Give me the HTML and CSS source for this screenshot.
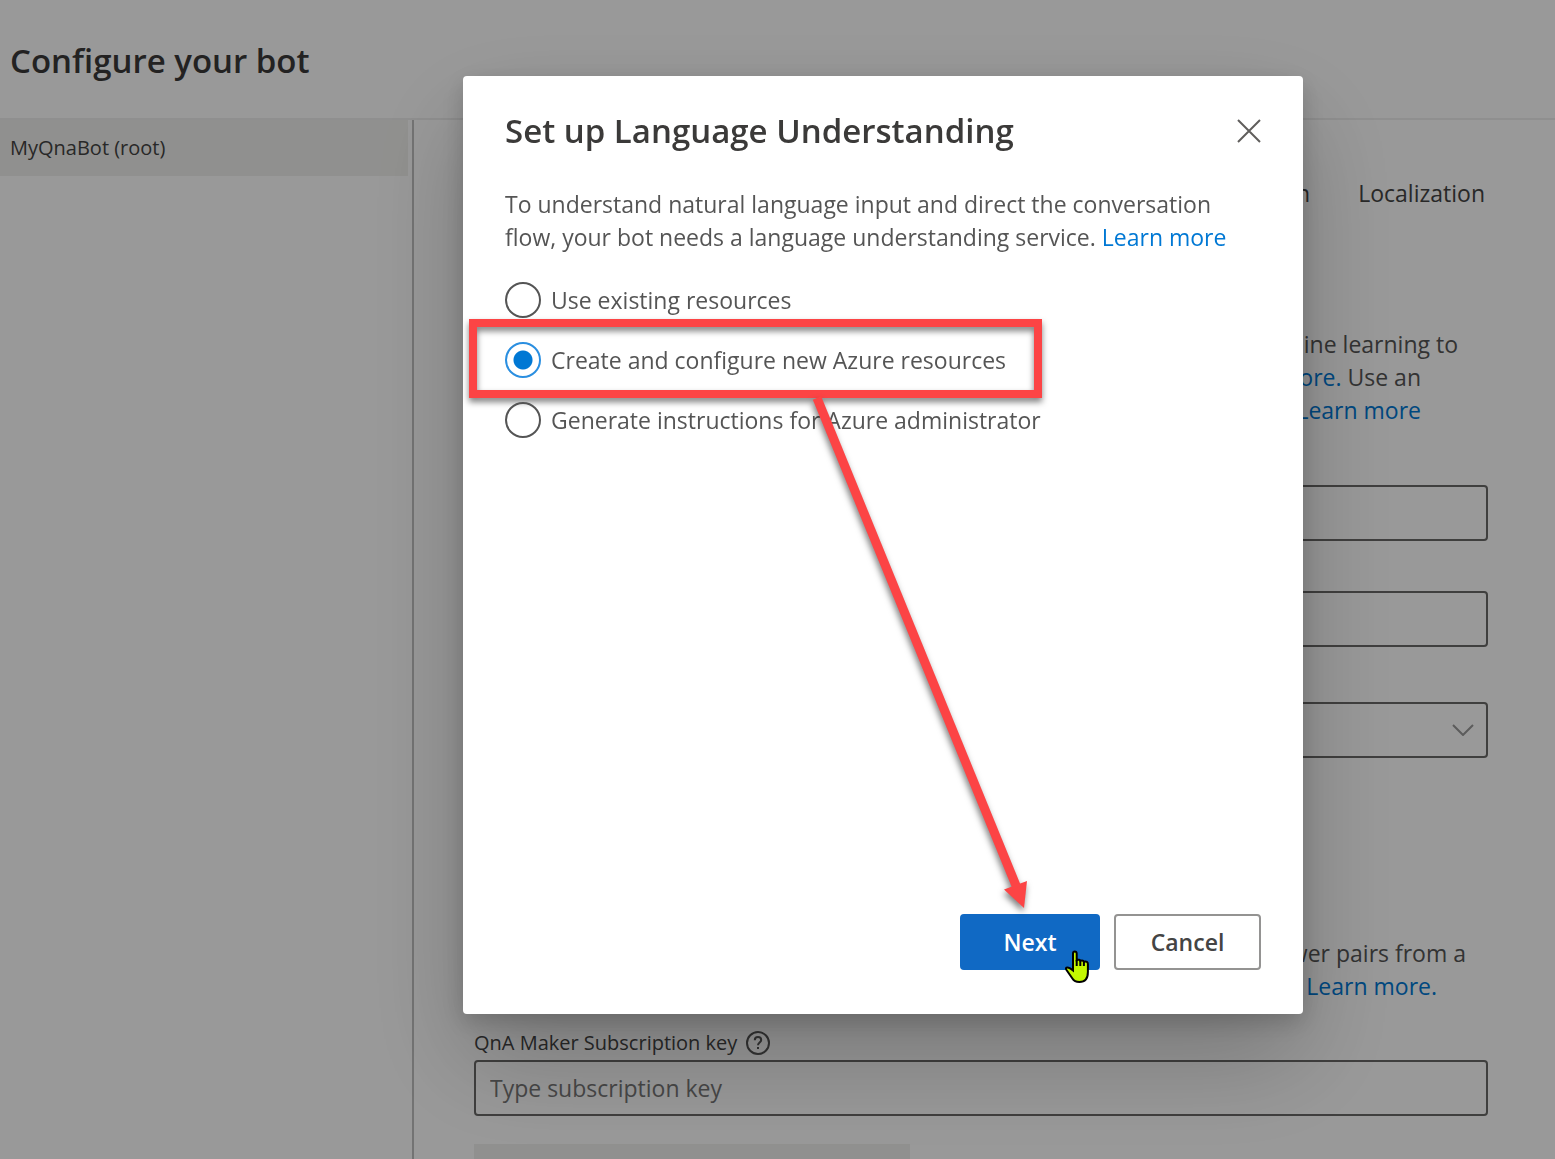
FILE: index.html
```html
<!DOCTYPE html>
<html lang="en">
<head>
<meta charset="utf-8">
<meta name="viewport" content="width=device-width, initial-scale=1">
<title>Configure your bot</title>
<link rel="stylesheet" href="styles.css">
</head>
<body>
<div class="app">
  <header class="app-header">
    <h1 class="app-title">Configure your bot</h1>
  </header>
  <div class="app-body">
    <nav class="sidebar" aria-label="Bots">
      <a class="sidebar-item" href="#root">MyQnaBot (root)</a>
    </nav>
    <main class="content">
      <nav class="tabs" aria-label="Settings">
        <a class="tab" href="#connection">Connection</a>
        <a class="tab" href="#localization">Localization</a>
      </nav>
      <p class="description luis-description">
        <span class="line">machine learning to</span>
        <span class="line line-short"><a href="#luis">Learn more.</a> Use an</span>
        <span class="line line-short"><a href="#luis-key">Learn more</a></span>
      </p>
      <div class="field">
        <label class="field-label" for="app-name">Application name</label>
        <input class="field-input" id="app-name" type="text">
      </div>
      <div class="field">
        <label class="field-label" for="authoring-key">Authoring key</label>
        <input class="field-input" id="authoring-key" type="text">
      </div>
      <div class="field field-region">
        <label class="field-label" for="region">Region</label>
        <div class="select-wrap">
          <select class="field-input" id="region"><option></option></select>
          <svg class="chevron" viewBox="0 0 22 12" aria-hidden="true"><path d="M1 1l10 10L21 1"/></svg>
        </div>
      </div>
      <p class="description qna-description">
        <span class="line">answer pairs from a</span>
        <span class="line line-end"><a href="#qna">Learn more.</a></span>
      </p>
      <div class="field field-key">
        <label class="field-label" for="subscription-key">QnA Maker Subscription key
          <svg class="help" viewBox="0 0 24 24" aria-hidden="true"><circle cx="12" cy="12" r="11"/><path d="M8.800 9.200c0-2 1.400-3.200 3.200-3.200s3.200 1.200 3.200 2.900c0 2.600-3.200 2.600-3.200 5.300"/><path d="M12 16v2"/></svg>
        </label>
        <input class="field-input" id="subscription-key" type="text" placeholder="Type subscription key">
      </div>
      <button class="key-button" type="button" aria-label="Set up QnA Maker" disabled></button>
    </main>
  </div>
</div>

<div class="overlay">
  <section class="dialog" role="dialog" aria-modal="true" aria-labelledby="dialog-title">
    <div class="dialog-head">
      <h2 class="dialog-title" id="dialog-title">Set up Language Understanding</h2>
      <button class="close" type="button" aria-label="Close">
        <svg viewBox="0 0 24 24" aria-hidden="true"><path d="M1 1l22 22M23 1L1 23"/></svg>
      </button>
    </div>
    <p class="dialog-text">To understand natural language input and direct the conversation<br>flow, your bot needs a language understanding service. <a href="#learn">Learn more</a></p>
    <div class="options" role="radiogroup" aria-labelledby="dialog-title">
      <label class="option"><input type="radio" name="setup">Use existing resources</label>
      <label class="option option-marked"><input type="radio" name="setup" checked>Create and configure new Azure resources</label>
      <label class="option"><input type="radio" name="setup">Generate instructions for Azure administrator</label>
    </div>
    <div class="dialog-actions">
      <button class="button button-primary" type="button">Next
        <svg class="pointer" viewBox="0 0 27 34" aria-hidden="true"><path d="M9 3.500q0-2 1.800-2t1.900 2V10q3-1 3.600.8 3-.9 3.600.9 4-.9 4 2.300V22q0 10-8.500 10-5 0-7-3.500L2.500 20Q1 17.500 3.500 17.500q1.800 0 5.500 3z"/><path d="M12.700 10v6M16.300 11v5M19.900 12v4"/></svg>
      </button>
      <button class="button" type="button">Cancel</button>
    </div>
    <svg class="arrow" viewBox="0 0 220 520" aria-hidden="true"><path d="M191 491.500L211 510l3-27z"/><path class="shaft" d="M4 0L204 490"/></svg>
  </section>
</div>
</body>
</html>
```
FILE: styles.css
```css
* {
  box-sizing: border-box;
}

body {
  margin: 0;
  background: #fff;
  color: #555;
  font: 23px/33px "Open Sans", "Noto Sans", sans-serif;
}

h1, h2, p {
  margin: 0;
}

a {
  color: #0078d4;
  text-decoration: none;
}

button, input, select {
  font: inherit;
  color: inherit;
}

.app {
  display: flex;
  flex-direction: column;
  height: 100vh;
  overflow: hidden;
}

.app-header {
  flex: none;
  padding: 40px 10px 36px;
  border-bottom: 2px solid #eee;
}

.app-title,
.dialog-title {
  font-size: 33px;
  line-height: 42px;
  font-weight: 600;
  color: #3b3a39;
}

.app-body {
  display: flex;
  flex: 1;
}

.sidebar {
  flex: 0 0 414px;
  padding-right: 4px;
  border-right: 2px solid #c0c0c0;
}

.sidebar-item {
  display: block;
  padding: 0 10px;
  background: #f1f1ee;
  color: #444;
  font-size: 20px;
  line-height: 56px;
}

.content {
  flex: 1;
  min-width: 0;
  padding: 57px 67px 0 60px;
}

.tabs {
  display: flex;
  justify-content: flex-end;
  gap: 48px;
  padding-right: 3px;
}

.tab {
  color: #444;
}

.description {
  text-align: right;
}

.luis-description {
  margin-top: 118px;
  padding-right: 30px;
}

.qna-description {
  margin-top: 179px;
  padding-right: 22px;
}

.line {
  display: block;
}

.line-short {
  padding-right: 37px;
}

.line-end {
  padding-right: 29px;
}

.field {
  margin-top: 15px;
}

.luis-description + .field {
  margin-top: 23px;
}

.field-region {
  margin-top: 20px;
}

.field-key {
  margin-top: 22px;
}

.field-label {
  display: flex;
  align-items: center;
  gap: 9px;
  height: 35px;
  color: #444;
  font-size: 20px;
}

.field-input {
  display: block;
  width: 100%;
  height: 56px;
  padding: 0 14px;
  border: 2px solid #6a6968;
  border-radius: 4px;
  background: #fff;
  appearance: none;
}

.field-input::placeholder {
  color: #777;
  opacity: 1;
}

.select-wrap {
  position: relative;
}

.chevron {
  position: absolute;
  top: 22px;
  right: 14px;
  width: 22px;
  height: 12px;
  fill: none;
  stroke: #999;
  stroke-width: 2;
}

.help {
  width: 24px;
  height: 24px;
  fill: none;
  stroke: #555;
  stroke-width: 2;
}

.key-button {
  display: block;
  width: 436px;
  height: 56px;
  margin-top: 28px;
  border: 0;
  background: #f1f1ee;
}

.overlay {
  position: fixed;
  inset: 0;
  display: flex;
  padding: 76px 252px 145px 463px;
  background: rgba(0, 0, 0, 0.4);
}

.dialog {
  position: relative;
  display: flex;
  flex: 1;
  flex-direction: column;
  padding: 34px 42px 44px;
  border-radius: 4px;
  background: #fff;
  box-shadow: 0 45px 100px rgba(0, 0, 0, 0.22), 0 8px 25px rgba(0, 0, 0, 0.18);
}

.dialog-head {
  display: flex;
  align-items: center;
  justify-content: space-between;
}

.close {
  width: 24px;
  height: 24px;
  padding: 0;
  border: 0;
  background: none;
}

.close svg {
  display: block;
  fill: none;
  stroke: #605e5c;
  stroke-width: 2;
}

.dialog-text {
  margin-top: 36px;
  white-space: nowrap;
}

.options {
  display: flex;
  flex-direction: column;
  align-items: flex-start;
  gap: 24px;
  margin-top: 28px;
}

.option {
  position: relative;
  display: flex;
  align-items: center;
  gap: 10px;
  height: 36px;
}

.option input {
  width: 36px;
  height: 36px;
  margin: 0;
  border: 2px solid #555;
  border-radius: 50%;
  appearance: none;
}

.option input:checked {
  border-color: #2b8fe0;
  background: radial-gradient(circle, #0078d4 9px, transparent 10px);
}

.option-marked::after {
  content: "";
  box-sizing: border-box;
  position: absolute;
  top: -23px;
  left: -36px;
  width: 573px;
  height: 79px;
  border: 8px solid #fc4445;
  filter: drop-shadow(0 4px 3px rgba(0, 0, 0, 0.5));
}

.dialog-actions {
  display: flex;
  justify-content: flex-end;
  gap: 14px;
  margin-top: auto;
}

.button {
  position: relative;
  min-width: 147px;
  height: 56px;
  border: 2px solid #949392;
  border-radius: 4px;
  background: #fff;
  color: #444;
  font-weight: 600;
}

.button-primary {
  min-width: 140px;
  border-color: #1069c4;
  background: #1069c4;
  color: #fff;
}

.pointer {
  position: absolute;
  right: 7px;
  bottom: -16px;
  width: 27px;
  height: 34px;
  fill: #c3f700;
  stroke: #000;
  stroke-width: 2;
}

.arrow {
  position: absolute;
  top: 322px;
  left: 350px;
  width: 220px;
  height: 520px;
  fill: #fc4445;
  filter: drop-shadow(-1px 4px 3px rgba(0, 0, 0, 0.5));
  overflow: visible;
  pointer-events: none;
}

.arrow .shaft {
  fill: none;
  stroke: #fc4445;
  stroke-width: 9;
}
```
